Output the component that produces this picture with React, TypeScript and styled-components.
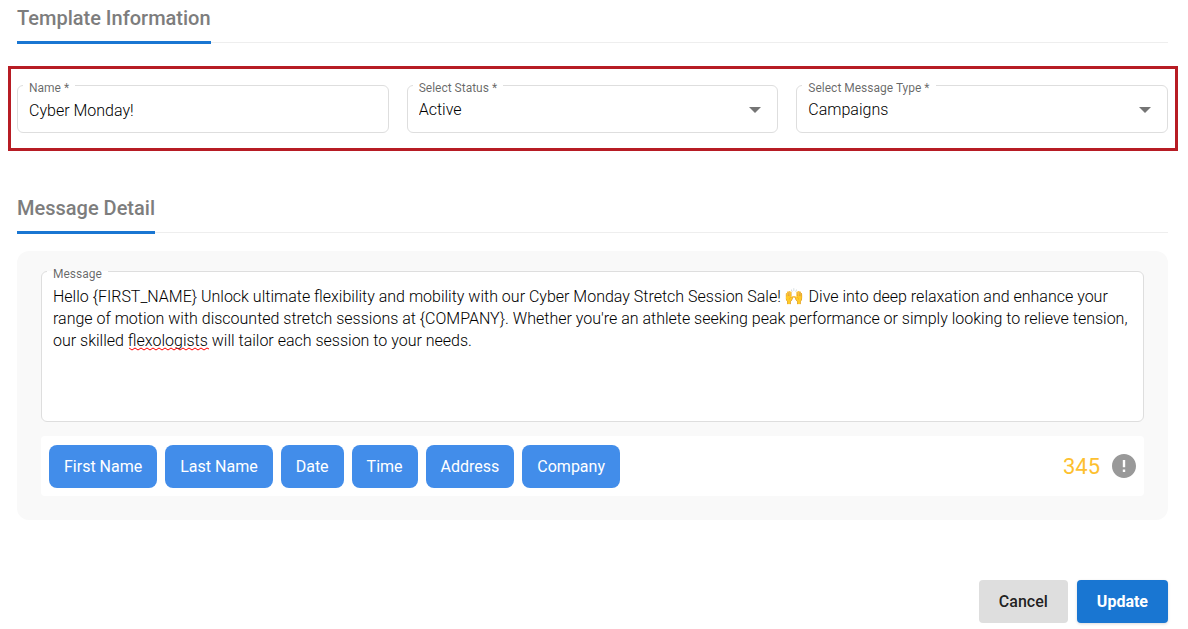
import React, { useId, useState } from "react";
import styled, { createGlobalStyle } from "styled-components";

const GlobalStyle = createGlobalStyle`
  *, *::before, *::after { box-sizing: border-box; }
  body {
    margin: 0;
    background: #fff;
    color: rgba(0, 0, 0, 0.87);
    font-family: Roboto, "Liberation Sans", "Noto Color Emoji", sans-serif;
    font-size: 16px;
  }
`;

const Page = styled.form`
  display: flex;
  flex-direction: column;
  padding: 0 20px 6px 17px;
`;

const SectionHeader = styled.header`
  position: relative;
  display: flex;
  height: 44px;

  &::after {
    content: "";
    position: absolute;
    left: 0;
    right: 0;
    bottom: 1px;
    height: 1px;
    background: #eee;
  }
`;

const SectionTitle = styled.h2`
  position: relative;
  z-index: 1;
  margin: 0;
  padding-top: 6px;
  border-bottom: 3px solid #1976d2;
  color: #7d7d7d;
  font-size: 20px;
  font-weight: 500;
  line-height: 24px;
`;

const FieldsFrame = styled.div`
  display: grid;
  grid-template-columns: repeat(3, minmax(0, 1fr));
  gap: 18px;
  margin: 22px -10px 39px -9px;
  padding: 16px 7px 15px 6px;
  border: 3px solid #b71c24;
`;

const Field = styled.div<{ $height: number }>`
  position: relative;
  display: flex;
  height: ${(p) => p.$height}px;
  border: 1px solid #dedede;
  border-radius: 6px;
  background: #fff;
`;

const FieldLabel = styled.label`
  position: absolute;
  top: -6px;
  left: 5px;
  padding: 0 6px;
  background: linear-gradient(#fff, #fff) 0 5px / 100% 1px no-repeat;
  color: rgba(0, 0, 0, 0.6);
  font-size: 12px;
  line-height: 16px;
`;

const TextInput = styled.input`
  width: 100%;
  padding: 2px 11px 0;
  border: 0;
  border-radius: 6px;
  outline: 0;
  background: transparent;
  color: #000;
  font: inherit;
  font-weight: 300;
`;

const SelectInput = styled.select`
  width: 100%;
  padding: 0 40px 0 11px;
  border: 0;
  border-radius: 6px;
  outline: 0;
  appearance: none;
  background: transparent;
  color: #000;
  font: inherit;
  font-weight: 300;
`;

const Arrow = styled.svg`
  position: absolute;
  top: 21px;
  right: 16px;
  width: 12px;
  height: 6px;
  fill: #757575;
  pointer-events: none;
`;

const MessageCard = styled.section`
  display: flex;
  flex-direction: column;
  gap: 14px;
  margin-top: 17px;
  padding: 20px 24px 24px;
  border-radius: 12px;
  background: #f9f9f9;
`;

const MessageInput = styled.textarea`
  width: 100%;
  padding: 14px 11px;
  border: 0;
  border-radius: 6px;
  outline: 0;
  resize: none;
  background: transparent;
  color: #000;
  font: inherit;
  font-weight: 300;
  line-height: 22px;
`;

const Squiggle = styled.svg`
  position: absolute;
  top: 75px;
  left: 87px;
  width: 80px;
  height: 4px;
  fill: none;
  stroke: #f00;
  pointer-events: none;
`;

const Toolbar = styled.div`
  display: flex;
  align-items: center;
  justify-content: space-between;
  height: 60px;
  padding: 0 8px;
  border-radius: 4px;
  background: #fff;
`;

const ChipList = styled.div`
  display: flex;
  gap: 8px;
`;

const Button = styled.button`
  height: 43px;
  padding: 0 15px;
  border: 0;
  border-radius: 8px;
  background: #428dea;
  color: #fff;
  font: inherit;
  cursor: pointer;
`;

const ActionButton = styled(Button)<{ $primary?: boolean }>`
  padding: 0 20px;
  border-radius: 4px;
  background: ${(p) => (p.$primary ? "#1976d2" : "#dedede")};
  color: ${(p) => (p.$primary ? "#fff" : "rgba(0, 0, 0, 0.87)")};
  font-weight: ${(p) => (p.$primary ? 700 : 500)};
  box-shadow: ${(p) => (p.$primary ? "0 1px 3px rgba(0, 0, 0, 0.15)" : "none")};
`;

const Counter = styled.div`
  display: flex;
  align-items: center;
  gap: 12px;
  color: #fdc02f;
  font-size: 22px;
`;

const InfoIcon = styled.svg`
  width: 24px;
  height: 24px;
  fill: #999;
`;

const Footer = styled.footer`
  display: flex;
  justify-content: flex-end;
  gap: 9px;
  margin-top: 60px;
`;

const PLACEHOLDERS = ["First Name", "Last Name", "Date", "Time", "Address", "Company"];

const MESSAGE =
  "Hello {FIRST_NAME} Unlock ultimate flexibility and mobility with our Cyber Monday Stretch Session Sale! 🙌 Dive into deep relaxation and enhance your range of motion with discounted stretch sessions at {COMPANY}. Whether you're an athlete seeking peak performance or simply looking to relieve tension, our skilled flexologists will tailor each session to your needs.";

function SelectField({ label, options }: { label: string; options: string[] }) {
  const id = useId();
  return (
    <Field $height={48}>
      <SelectInput id={id} defaultValue={options[0]}>
        {options.map((o) => (
          <option key={o}>{o}</option>
        ))}
      </SelectInput>
      <FieldLabel htmlFor={id}>{label}</FieldLabel>
      <Arrow viewBox="0 0 12 6" aria-hidden="true">
        <path d="M0 0h12L6 6z" />
      </Arrow>
    </Field>
  );
}

export default function App() {
  const [name, setName] = useState("Cyber Monday!");
  const [message, setMessage] = useState(MESSAGE);

  return (
    <>
      <GlobalStyle />
      <Page onSubmit={(e) => e.preventDefault()}>
        <SectionHeader>
          <SectionTitle>Template Information</SectionTitle>
        </SectionHeader>
        <FieldsFrame>
          <Field $height={48}>
            <TextInput id="name" value={name} onChange={(e) => setName(e.target.value)} />
            <FieldLabel htmlFor="name">Name *</FieldLabel>
          </Field>
          <SelectField label="Select Status *" options={["Active"]} />
          <SelectField label="Select Message Type *" options={["Campaigns"]} />
        </FieldsFrame>

        <SectionHeader>
          <SectionTitle>Message Detail</SectionTitle>
        </SectionHeader>
        <MessageCard>
          <Field $height={151}>
            <MessageInput
              id="message"
              value={message}
              onChange={(e) => setMessage(e.target.value)}
            />
            <FieldLabel htmlFor="message">Message</FieldLabel>
            {message === MESSAGE && (
              <Squiggle viewBox="0 0 80 4" aria-hidden="true">
                <path d="M0 1l3 2 3-2 3 2 3-2 3 2 3-2 3 2 3-2 3 2 3-2 3 2 3-2 3 2 3-2 3 2 3-2 3 2 3-2 3 2 3-2 3 2 3-2 3 2 3-2 3 2 3-2 2 1" />
              </Squiggle>
            )}
          </Field>
          <Toolbar>
            <ChipList>
              {PLACEHOLDERS.map((p) => (
                <Button key={p} type="button">
                  {p}
                </Button>
              ))}
            </ChipList>
            <Counter>
              <span>345</span>
              <InfoIcon viewBox="2 2 20 20" role="img" aria-label="Character count">
                <path d="M12 2C6.48 2 2 6.48 2 12s4.48 10 10 10 10-4.48 10-10S17.52 2 12 2zm1 15h-2v-2h2v2zm0-4h-2V7h2v6z" />
              </InfoIcon>
            </Counter>
          </Toolbar>
        </MessageCard>

        <Footer>
          <ActionButton type="button">Cancel</ActionButton>
          <ActionButton type="submit" $primary>
            Update
          </ActionButton>
        </Footer>
      </Page>
    </>
  );
}
